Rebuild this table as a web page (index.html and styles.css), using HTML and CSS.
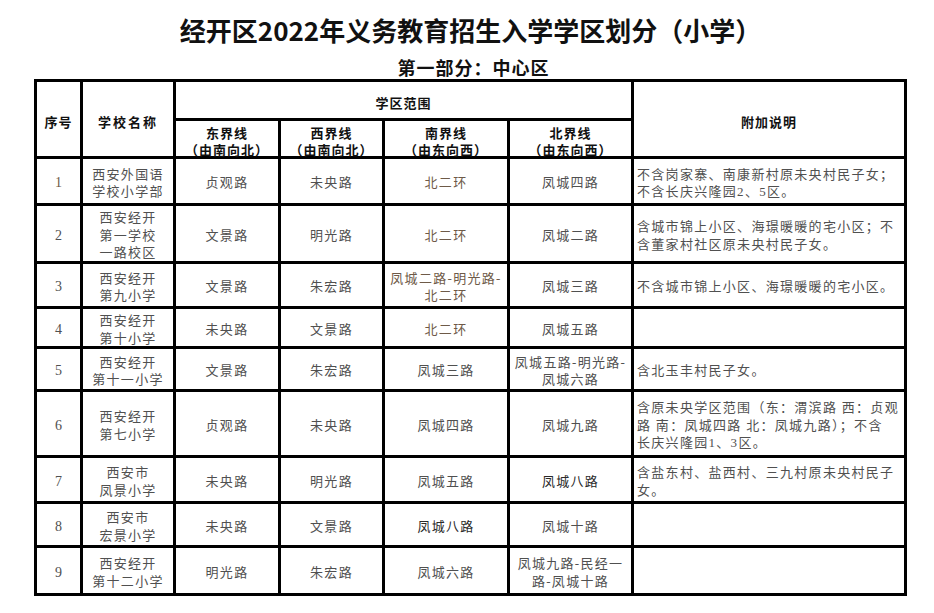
FILE: index.html
```html
<!DOCTYPE html>
<html lang="zh-CN">
<head>
<meta charset="utf-8">
<title>经开区2022年义务教育招生入学学区划分（小学）</title>
<link rel="stylesheet" href="styles.css">
</head>
<body>
<div class="page">
  <h1 class="title">经开区2022年义务教育招生入学学区划分（小学）</h1>
  <h2 class="subtitle">第一部分：中心区</h2>
  <div class="sheet">
    <div class="c h span-r2">序号</div>
    <div class="c h span-r2 wide">学校名称</div>
    <div class="c h span-c4">学区范围</div>
    <div class="c h span-r2">附加说明</div>
    <div class="c h">东界线<br>（由南向北）</div>
    <div class="c h">西界线<br>（由南向北）</div>
    <div class="c h">南界线<br>（由东向西）</div>
    <div class="c h">北界线<br>（由东向西）</div>

    <div class="c num warm">1</div>
    <div class="c">西安外国语<br>学校小学部</div>
    <div class="c">贞观路</div>
    <div class="c">未央路</div>
    <div class="c warm">北二环</div>
    <div class="c">凤城四路</div>
    <div class="c note">不含岗家寨、南康新村原未央村民子女；<br>不含长庆兴隆园2、5区。</div>

    <div class="c num">2</div>
    <div class="c">西安经开<br>第一学校<br>一路校区</div>
    <div class="c">文景路</div>
    <div class="c">明光路</div>
    <div class="c warm">北二环</div>
    <div class="c">凤城二路</div>
    <div class="c note">含城市锦上小区、海璟暖暖的宅小区；不<br>含董家村社区原未央村民子女。</div>

    <div class="c num">3</div>
    <div class="c">西安经开<br>第九小学</div>
    <div class="c">文景路</div>
    <div class="c">朱宏路</div>
    <div class="c warm">凤城二路-明光路-<br>北二环</div>
    <div class="c">凤城三路</div>
    <div class="c note">不含城市锦上小区、海璟暖暖的宅小区。</div>

    <div class="c num">4</div>
    <div class="c">西安经开<br>第十小学</div>
    <div class="c">未央路</div>
    <div class="c">文景路</div>
    <div class="c warm">北二环</div>
    <div class="c">凤城五路</div>
    <div class="c note"></div>

    <div class="c num">5</div>
    <div class="c">西安经开<br>第十一小学</div>
    <div class="c">文景路</div>
    <div class="c">朱宏路</div>
    <div class="c">凤城三路</div>
    <div class="c">凤城五路-明光路-<br>凤城六路</div>
    <div class="c note">含北玉丰村民子女。</div>

    <div class="c num">6</div>
    <div class="c">西安经开<br>第七小学</div>
    <div class="c">贞观路</div>
    <div class="c">未央路</div>
    <div class="c">凤城四路</div>
    <div class="c">凤城九路</div>
    <div class="c note">含原未央学区范围（东：渭滨路 西：贞观<br>路 南：凤城四路 北：凤城九路）；不含<br>长庆兴隆园1、3区。</div>

    <div class="c num">7</div>
    <div class="c">西安市<br>凤景小学</div>
    <div class="c">未央路</div>
    <div class="c">明光路</div>
    <div class="c">凤城五路</div>
    <div class="c dark">凤城八路</div>
    <div class="c note">含盐东村、盐西村、三九村原未央村民子<br>女。</div>

    <div class="c num">8</div>
    <div class="c">西安市<br>宏景小学</div>
    <div class="c">未央路</div>
    <div class="c">文景路</div>
    <div class="c dark">凤城八路</div>
    <div class="c">凤城十路</div>
    <div class="c note"></div>

    <div class="c num">9</div>
    <div class="c">西安经开<br>第十二小学</div>
    <div class="c">明光路</div>
    <div class="c">朱宏路</div>
    <div class="c">凤城六路</div>
    <div class="c">凤城九路-民经一<br>路-凤城十路</div>
    <div class="c note"></div>
  </div>
</div>
</body>
</html>
```
FILE: styles.css
```css
body {
  margin: 0;
  background: #fff;
  font-family: "Liberation Serif", "Noto Sans CJK SC", serif;
}

.page {
  width: 873px;
  margin-left: 34px;
}

.title {
  margin: 15px 0 0;
  height: 30px;
  line-height: 30px;
  font-family: "Noto Sans CJK SC", sans-serif;
  font-weight: bold;
  font-size: 26px;
  text-align: center;
  color: #111;
}

.subtitle {
  margin: 10px 0 0;
  height: 24px;
  line-height: 24px;
  font-family: "Noto Sans CJK SC", sans-serif;
  font-weight: bold;
  font-size: 18px;
  letter-spacing: 1px;
  text-align: center;
  color: #111;
  padding-left: 6px;
}

.sheet {
  box-sizing: border-box;
  width: 873px;
  display: grid;
  grid-template-columns: 43px 90px 102px 101px 122px 121px 270px;
  grid-template-rows: 36px 35px 44px 55px 42px 37px 40px 63px 43px 41px 45px;
  gap: 3px;
  padding: 3px;
  background: #000;
}

.c {
  background: #fff;
  display: flex;
  align-items: center;
  justify-content: center;
  text-align: center;
  box-sizing: border-box;
  padding-top: 4px;
  font-size: 13px;
  line-height: 17.5px;
  letter-spacing: 1.3px;
  color: #505050;
  white-space: nowrap;
}

.h {
  font-family: "Liberation Serif", "Noto Sans CJK SC", sans-serif;
  font-weight: bold;
  color: #111;
  padding-top: 6px;
  letter-spacing: 1px;
  line-height: 17px;
}

.h.wide {
  letter-spacing: 2px;
}

.span-r2 {
  grid-row: span 2;
}

.span-c4 {
  grid-column: span 4;
}

.num {
  font-size: 14px;
  letter-spacing: 0;
}

.warm {
  color: #6e5a48;
}

.dark {
  color: #2a2a2a;
}

.note {
  justify-content: flex-start;
  text-align: left;
  padding-left: 3px;
}
```
